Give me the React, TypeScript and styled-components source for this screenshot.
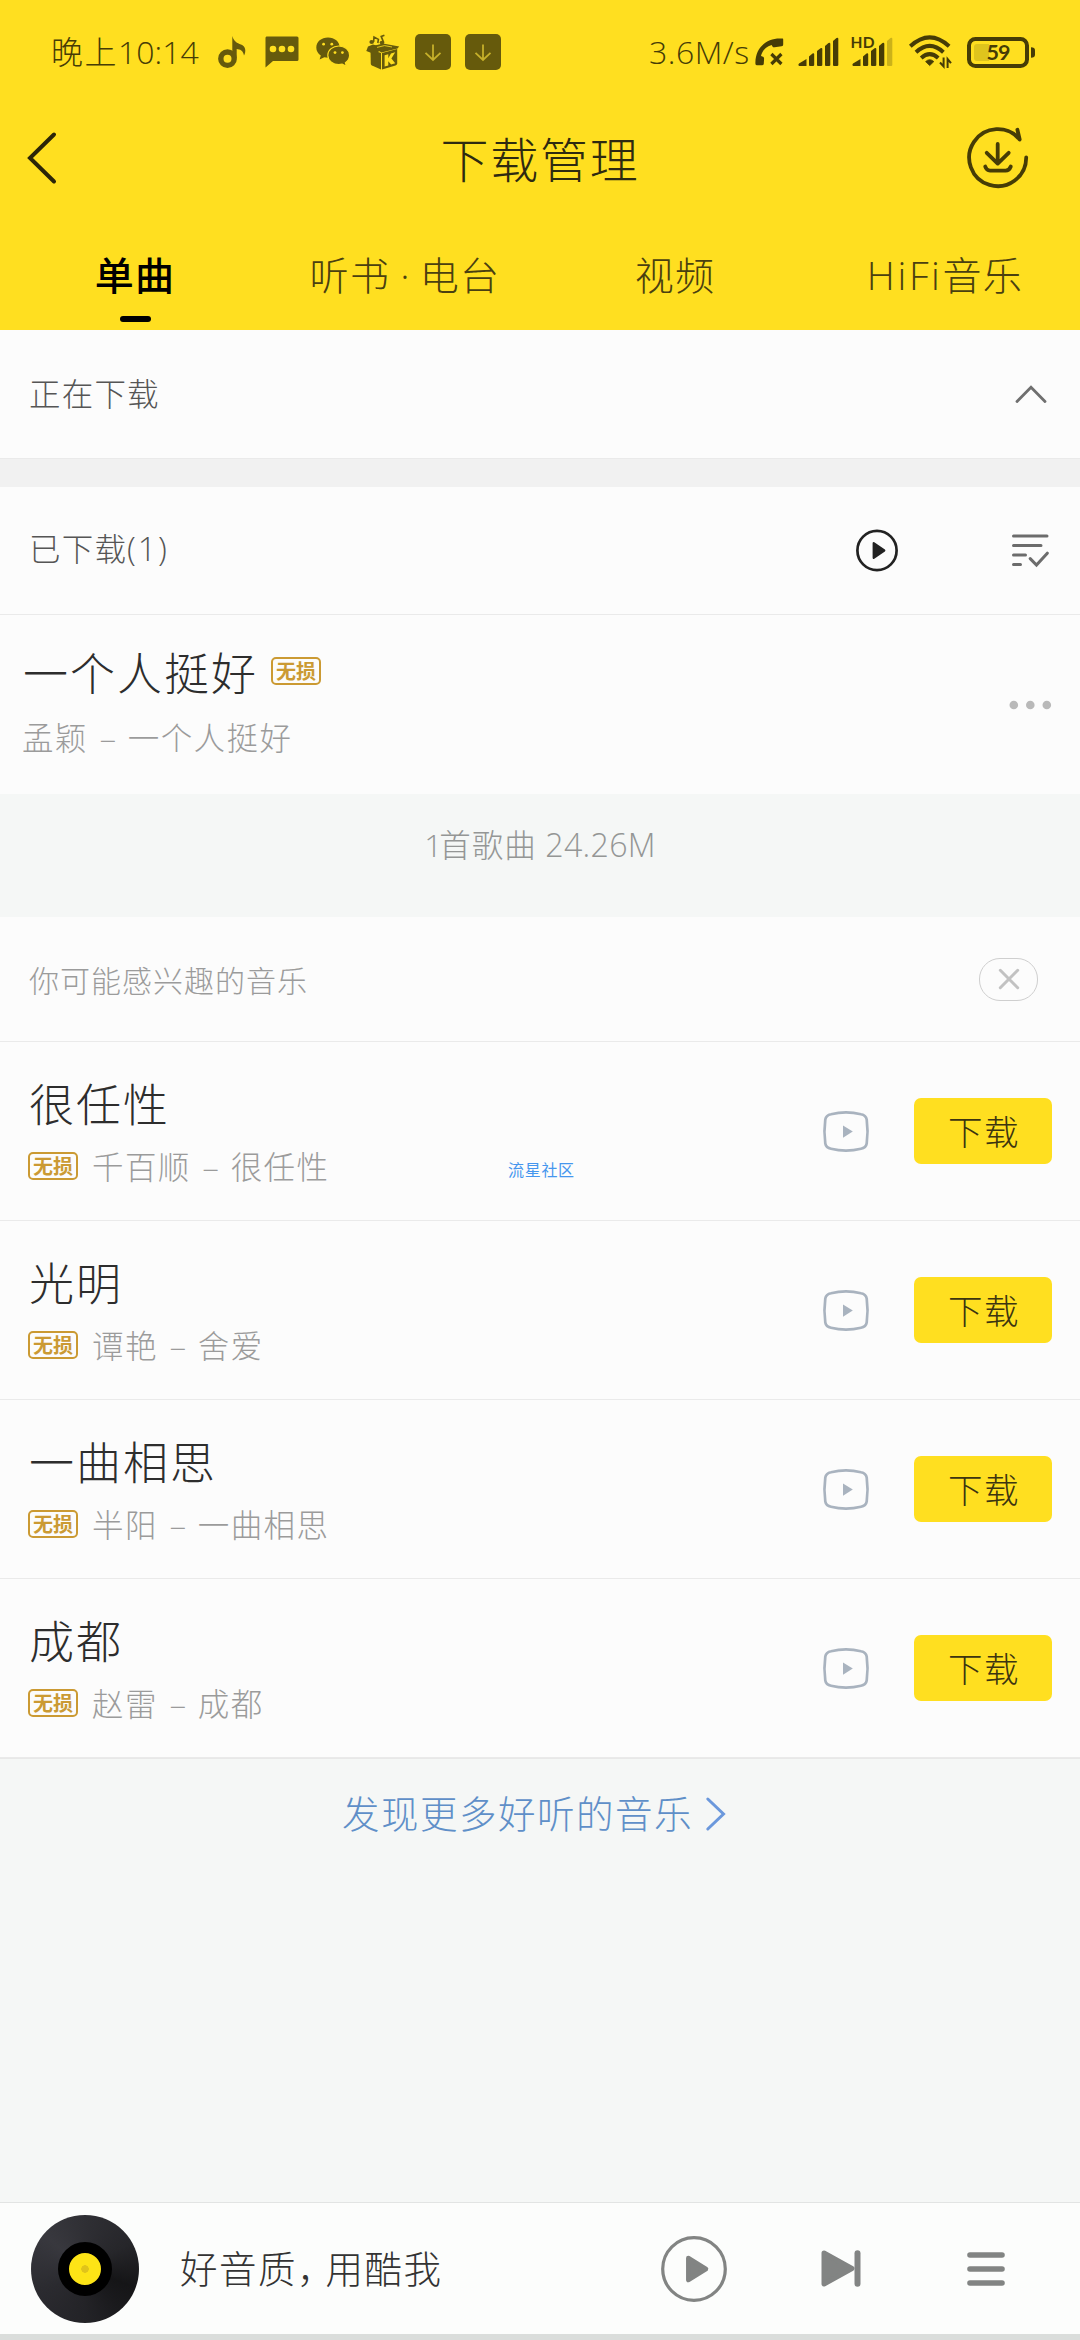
import React from "react";
import styled, { createGlobalStyle } from "styled-components";

const yellow = "#ffdf20";
const statusInk = "#463c06";
const statusMuted = "#665a0c";
const gold = "#cb9a33";

const GlobalStyle = createGlobalStyle`
  * { box-sizing: border-box; }
  body {
    margin: 0;
    background: #f5f7f6;
    font-family: "Noto Sans CJK SC", sans-serif;
    font-weight: 300;
    -webkit-font-smoothing: antialiased;
  }
`;

const Page = styled.div`
  width: 1080px;
  height: 2340px;
  display: flex;
  flex-direction: column;
  overflow: hidden;
  position: relative;
`;

const Text = styled.span<{ $size: number; $track?: number; $color?: string; $up?: number }>`
  font-size: ${(p) => p.$size}px;
  letter-spacing: ${(p) => p.$track ?? 0}px;
  color: ${(p) => p.$color ?? "#333"};
  padding-bottom: ${(p) => p.$up ?? 0}px;
  line-height: 1;
  white-space: pre;
`;

const Latin = styled.span<{ $track?: number; $size?: string }>`
  font-family: "Open Sans", sans-serif;
  font-size: ${(p) => p.$size ?? "1em"};
  letter-spacing: ${(p) => p.$track ?? 0}px;
`;

const Dash = styled.span`
  display: inline-block;
  width: 40px;
  text-align: center;
  letter-spacing: 0;
`;

const Header = styled.header`
  height: 330px;
  background: ${yellow};
  display: flex;
  flex-direction: column;
`;

const StatusBar = styled.div`
  height: 104px;
  padding: 0 45px 0 51px;
  display: flex;
  align-items: center;
`;

const StatusGroup = styled.div<{ $right?: boolean }>`
  display: flex;
  align-items: center;
  margin-left: ${(p) => (p.$right ? "auto" : "0")};
`;

const ClockBox = styled.div`
  width: 167px;
  display: flex;
  align-items: center;
`;

const SpeedBox = styled.div`
  width: 106px;
  display: flex;
  align-items: center;
`;

const Icon = styled.svg<{ $ml?: number }>`
  display: block;
  flex: none;
  overflow: visible;
  margin-left: ${(p) => p.$ml ?? 0}px;
`;

const TitleBar = styled.div`
  height: 108px;
  padding: 0 51px 0 27px;
  display: grid;
  grid-template-columns: 150px 1fr 126px;
  align-items: center;
  & > :last-child { justify-self: end; }
`;

const TitleText = styled.h1`
  margin: 0 0 2px;
  font-weight: 300;
  font-size: 48px;
  letter-spacing: 1.7px;
  line-height: 1;
  text-align: center;
  color: #2e2a10;
`;

const Tabs = styled.nav`
  display: grid;
  grid-template-columns: repeat(4, 270px);
  height: 118px;
`;

const Tab = styled.div<{ $active?: boolean }>`
  display: flex;
  flex-direction: column;
  align-items: center;
  padding-top: 40px;
  font-size: 39px;
  line-height: 42px;
  letter-spacing: 1.3px;
  white-space: pre;
  color: ${(p) => (p.$active ? "#000" : "#4a4010")};
  font-weight: ${(p) => (p.$active ? 500 : 300)};
`;

const TabMark = styled.div`
  margin-top: 22px;
  width: 31px;
  height: 6px;
  border-radius: 3px;
  background: #000;
`;

const SectionHead = styled.section<{ $h: number; $right: number }>`
  height: ${(p) => p.$h}px;
  padding: 0 ${(p) => p.$right}px 0 29px;
  background: #fcfcfc;
  border-bottom: 1px solid #eaeaea;
  display: flex;
  align-items: center;
  justify-content: space-between;
`;

const Gap = styled.div`
  height: 28px;
  background: #f1f1f1;
`;

const Actions = styled.div<{ $gap: number }>`
  display: flex;
  align-items: center;
  gap: ${(p) => p.$gap}px;
`;

const DownloadedRow = styled.div`
  height: 179px;
  background: #fcfcfc;
  padding: 0 28px 0 22px;
  display: flex;
  align-items: center;
  justify-content: space-between;
`;

const Stack = styled.div<{ $gap: number; $up?: number }>`
  display: flex;
  flex-direction: column;
  gap: ${(p) => p.$gap}px;
  padding-bottom: ${(p) => p.$up ?? 0}px;
`;

const Line = styled.div<{ $gap: number }>`
  display: flex;
  align-items: center;
  gap: ${(p) => p.$gap}px;
`;

const SongTitle = styled.span`
  padding-left: 1px;
  font-size: 45px;
  letter-spacing: 2px;
  line-height: 1;
  color: #2d2d2d;
`;

const Badge = styled.span`
  width: 50px;
  height: 28px;
  border: 2px solid ${gold};
  border-radius: 5px;
  display: flex;
  align-items: center;
  justify-content: center;
  font-size: 20px;
  font-weight: 700;
  line-height: 1;
  color: ${gold};
`;

const Summary = styled.div`
  height: 123px;
  padding-top: 34px;
  background: #f5f7f6;
  display: flex;
  justify-content: center;
  align-items: flex-start;
`;

const ClosePill = styled.button`
  width: 59px;
  height: 43px;
  padding: 0;
  border: 1.5px solid #cfcfcf;
  border-radius: 21px;
  background: transparent;
  display: flex;
  align-items: center;
  justify-content: center;
`;

const SongRow = styled.div`
  height: 179px;
  padding: 0 28px;
  background: #fcfcfc;
  border-bottom: 1px solid #eaeaea;
  display: flex;
  align-items: center;
  justify-content: space-between;
`;

const DownloadButton = styled.button`
  width: 138px;
  height: 66px;
  padding: 0 0 2px 2px;
  border: 0;
  border-radius: 7px;
  background: ${yellow};
  font: 300 34.5px/1 "Noto Sans CJK SC", sans-serif;
  letter-spacing: 1.6px;
  color: #3c3410;
`;

const More = styled.div`
  flex: 1;
  border-top: 1px solid #e8e8e8;
  background: #f5f7f6;
  padding: 34px 0 0 342px;
  display: flex;
  align-items: flex-start;
  gap: 13px;
`;

const MoreArrow = styled.div`
  padding-top: 4px;
`;

const Player = styled.footer`
  height: 138px;
  border-top: 1px solid #e2e4e3;
  border-bottom: 6px solid #dadddb;
  background: #fcfdfc;
  padding: 0 75px 0 31px;
  display: flex;
  align-items: center;
`;

const Disc = styled.div`
  width: 108px;
  height: 108px;
  border-radius: 50%;
  background: conic-gradient(from 0deg, #2f2f34, #26262a 60deg, #151517 110deg, #1a1a1d 140deg, #232327 180deg, #2a2a2f 240deg, #38383e 310deg, #2f2f34);
  display: flex;
  align-items: center;
  justify-content: center;
`;

const DiscHub = styled.div`
  width: 54px;
  height: 54px;
  border-radius: 50%;
  border: 11px solid #000;
  background: radial-gradient(circle, #e0c41a 0 3.5px, #fde416 4px);
`;

const Slogan = styled.div`
  margin-left: 41px;
  padding-bottom: 4px;
  flex: 1;
  display: flex;
`;

const Watermark = styled.span`
  position: absolute;
  left: 508px;
  top: 1160px;
  font-size: 16px;
  line-height: 18px;
  letter-spacing: 0.7px;
  font-weight: 400;
  color: #4596ee;
`;

const MusicNote = () => (
  <Icon width="28" height="33" viewBox="0 0 28 33">
    <circle cx="9.5" cy="22.7" r="6.7" fill="none" stroke={statusMuted} strokeWidth="5.4" />
    <path d="M14.3 0 C16 5.5 19 7.2 23 8.4 C27.5 10 28.5 15 26 19.5 C25.2 14.5 22 13.2 18.7 13 V22 H14.3 Z" fill={statusMuted} />
  </Icon>
);

const MessageBubble = () => (
  <Icon $ml={19} width="34" height="32" viewBox="0 0 34 32">
    <path d="M1.5 0.5 H32 Q33.5 0.5 33.5 2 V23.5 Q33.5 25 32 25 H8 L0.5 31.5 V2 Q0.5 0.5 1.5 0.5Z" fill={statusMuted} />
    <g fill={yellow}>
      <circle cx="8" cy="13" r="3.3" />
      <circle cx="17" cy="13" r="3.3" />
      <circle cx="26" cy="13" r="3.3" />
    </g>
  </Icon>
);

const ChatBubbles = () => (
  <Icon $ml={17} width="34" height="30" viewBox="0 0 34 30">
    <path d="M12 0.5 C5.4 0.5 0.3 4.8 0.3 10.5 C0.3 13.8 2 16.7 4.8 18.6 L3.6 22.5 L8.3 20.2 C9.5 20.5 10.8 20.7 12 20.7 C18.6 20.7 23.7 16.2 23.7 10.5 C23.7 4.8 18.6 0.5 12 0.5Z" fill={statusMuted} />
    <path d="M22.8 9 C16.8 9 11.8 13 11.8 18.3 C11.8 23.6 16.8 27.6 22.8 27.6 C24 27.6 25.1 27.4 26.2 27.1 L30.4 29.4 L29.4 25.7 C32 24 33.6 21.3 33.6 18.3 C33.6 13 28.8 9 22.8 9Z" fill={statusMuted} stroke={yellow} strokeWidth="1.2" />
    <g fill={yellow}>
      <circle cx="7.6" cy="7.2" r="1.4" />
      <circle cx="15.8" cy="7.2" r="1.4" />
      <circle cx="19" cy="15.6" r="1.4" />
      <circle cx="26.4" cy="15.6" r="1.4" />
    </g>
  </Icon>
);

const MusicBox = () => (
  <Icon $ml={16} width="34" height="36" viewBox="0 0 34 36">
    <g fill={statusMuted}>
      <path d="M4.5 15.5 L15 19 V35.5 L6 31.5 Q5 31 4.8 30Z" />
      <path d="M16 19 L31.2 15 V29.5 Q31 31 29.5 31.5 L16 35.5Z" />
      <path d="M5 12.5 L17 9.6 L33.2 12.6 L31.5 14.6 L15.6 18.4Z" />
      <path d="M0.3 17 L5 12.4 L14.5 15.2 L10 20.8Z" />
      <path d="M0.3 17 L2 12.6 L7 10.5 L12 12Z" />
      <ellipse cx="5.7" cy="8" rx="2.3" ry="1.9" />
      <ellipse cx="16" cy="8.6" rx="2.3" ry="1.9" />
    </g>
    <path d="M7.6 8 L8 3 L12.4 5.4 L11.8 9 M17.6 8.4 L15.2 2.4 L18.4 1.2" fill="none" stroke={statusMuted} strokeWidth="1.6" />
    <path d="M11 13.4 L18.5 11.6 L26 13" fill="none" stroke={yellow} strokeWidth="0.8" />
    <path d="M18.6 21.2 L22.3 20.2 V24.2 L25 19.4 L29.2 18.2 L25.4 24.4 L29.2 29.2 L25.1 30.5 L22.3 27.2 V31.4 L18.6 32.4Z" fill={yellow} />
  </Icon>
);

const DownloadBadge = ({ ml }: { ml: number }) => (
  <Icon $ml={ml} width="36" height="36" viewBox="0 0 36 36">
    <rect width="36" height="36" rx="5" fill={statusMuted} />
    <path d="M18 10.5 V25 M10.5 18.8 L18 26 L25.5 18.8" fill="none" stroke="#c6b02a" strokeWidth="1.8" />
  </Icon>
);

const CallBlocked = () => (
  <Icon width="29" height="28" viewBox="0 0 29 28">
    <path d="M27.6 0.6 C13 -0.8 0.6 8.5 0.4 24.5 C0.3 26.6 0.8 27.2 1.8 27.2 H7.2 C8.3 27.2 8.7 26.7 8.8 25.6 L9.1 20.6 C9.1 19.4 8.6 18.7 7.4 18.4 L6 18 C7.2 12.6 11 8.4 16.6 7 L17.5 8.5 C18 9.3 18.6 9.5 19.6 9.3 L26.6 8.2 C27.8 8 28.2 7.4 28.2 6.2 V1.6 C28.2 1 28 0.7 27.6 0.6Z" fill={statusInk} />
    <path d="M16.4 16 L26.4 26 M26.4 16 L16.4 26" stroke={statusInk} strokeWidth="3.2" />
  </Icon>
);

const SignalBars = ({ ml, faded, hd }: { ml: number; faded?: boolean; hd?: boolean }) => (
  <Icon $ml={ml} width="41" height="30" viewBox="0 0 41 30">
    <g fill={statusInk}>
      <path d="M1 26.5 L8.5 22 V29 H1.2 Q-0.6 28 1 26.5Z" />
      <path d="M11 19.5 L14.5 16.5 Q16.2 15.8 16.2 17.5 V28 Q16.2 29 15 29 H12 Q11 29 11 28Z" />
      <path d="M19 14 L22.5 11.3 Q24.3 10.5 24.3 12 V28 Q24.3 29 23 29 H20 Q19 29 19 28Z" />
      <path d="M27 9 L30.5 6 Q32.3 5.3 32.3 7 V28 Q32.3 29 31 29 H28 Q27 29 27 28Z" />
      <path opacity={faded ? 0.28 : 1} d="M35 4 L38.5 1 Q40.3 0 40.3 2 V28 Q40.3 29 39 29 H36 Q35 29 35 28Z" />
    </g>
    {hd && (
      <text x="-1.5" y="10.5" fontFamily="Lato, sans-serif" fontWeight="700" fontSize="15.5" letterSpacing="0.4" fill={statusInk} stroke={yellow} strokeWidth="1.5" paintOrder="stroke">HD</text>
    )}
  </Icon>
);

const Wifi = () => (
  <Icon $ml={16} width="42" height="34" viewBox="0 0 42 34">
    <g fill="none" stroke={statusInk} strokeWidth="4">
      <path d="M1.3 11.2 Q20.7 -6.6 40.1 11.2" />
      <path d="M7 17.2 Q20.7 4.6 34.4 17.2" />
      <path d="M12.2 23 Q20.7 15.4 29.2 23" />
    </g>
    <path d="M16.6 26.6 Q20.7 22.8 24.8 26.6 L20.7 30.6Z" fill={statusInk} stroke={statusInk} strokeWidth="0.8" />
    <path d="M34.6 22.5 V31.5 L31 27.5 M38.6 33 V24 L42 28.2" fill="none" stroke={statusInk} strokeWidth="2" />
  </Icon>
);

const Battery = () => (
  <Icon $ml={16} width="68" height="31" viewBox="0 0 68 31">
    <rect x="2" y="2" width="58" height="27" rx="6.5" fill="none" stroke={statusInk} strokeWidth="4" />
    <path d="M10 7 H22 V24 H10 Q7 24 7 21 V10 Q7 7 10 7Z" fill="#dfc41d" />
    <path d="M64 10.3 Q68 10.3 68 13.5 V17.5 Q68 20.7 64 20.7Z" fill={statusInk} />
    <text x="19.6" y="23" fontFamily="Lato, sans-serif" fontWeight="700" fontSize="21.5" letterSpacing="-1" fill={statusInk}>59</text>
  </Icon>
);

const BackArrow = () => (
  <Icon width="30" height="52" viewBox="0 0 30 52">
    <path d="M27 2.5 L3 26 L27 49.5" fill="none" stroke="#2b2508" strokeWidth="4" strokeLinecap="round" />
  </Icon>
);

const SyncDownload = () => (
  <Icon width="62" height="62" viewBox="0 0 62 62">
    <g fill="none" stroke={statusInk} strokeWidth="3.8" strokeLinecap="round" strokeLinejoin="round">
      <path d="M59.2 30.5 A28.5 28.5 0 1 1 52.7 12.5 L50.4 2.8" />
      <path d="M30.7 17 V36 M19.7 25.8 L30.7 36.6 L41.7 25.8 M18.2 39.5 Q19.5 43.6 23 43.6 H38.6 Q42.2 43.6 43.8 39.5" />
    </g>
  </Icon>
);

const ChevronUp = () => (
  <Icon width="30" height="18" viewBox="0 0 30 18">
    <path d="M1 16.5 L15 2.2 L29 16.5" fill="none" stroke="#6f6f6f" strokeWidth="2.8" strokeLinecap="round" />
  </Icon>
);

const PlayAll = () => (
  <Icon width="42" height="42" viewBox="0 0 42 42">
    <circle cx="21" cy="20.5" r="19.6" fill="none" stroke="#222" strokeWidth="2.7" />
    <path d="M17.7 13.2 L28.3 20.5 L17.7 27.8Z" fill="#222" stroke="#222" strokeWidth="2.2" strokeLinejoin="round" />
  </Icon>
);

const ListCheck = () => (
  <Icon width="37" height="33" viewBox="0 0 37 33">
    <path d="M1.5 2 H35 M1.5 11.5 H29 M1.5 21 H13.5 M1.5 30.5 H8.5 M18.2 24.6 L24.5 31 L35.3 19.2" fill="none" stroke="#6c6c6c" strokeWidth="3" strokeLinecap="round" />
  </Icon>
);

const Dots = () => (
  <Icon width="43" height="10" viewBox="0 0 43 10">
    <g fill="#b9b9b9">
      <circle cx="4.8" cy="5" r="4.3" />
      <circle cx="21.3" cy="5" r="4.3" />
      <circle cx="37.8" cy="5" r="4.3" />
    </g>
  </Icon>
);

const Cross = () => (
  <Icon width="20" height="20" viewBox="0 0 20 20">
    <path d="M1.3 1.3 L18.7 18.7 M18.7 1.3 L1.3 18.7" stroke="#c2c2c2" strokeWidth="3" strokeLinecap="round" />
  </Icon>
);

const VideoIcon = () => (
  <Icon width="46" height="41" viewBox="0 0 46 41">
    <path d="M8 3.2 Q23 -0.5 38 3.2 Q43 4.2 43.7 8.5 Q45.4 20.5 43.7 32.5 Q43 36.8 38 37.8 Q23 41.5 8 37.8 Q3 36.8 2.3 32.5 Q0.6 20.5 2.3 8.5 Q3 4.2 8 3.2Z" fill="none" stroke="#a9b3bf" strokeWidth="2.7" />
    <path d="M20 14.5 L29.8 20.5 L20 26.7Z" fill="#a9b3bf" />
  </Icon>
);

const ChevronRight = () => (
  <Icon width="20" height="34" viewBox="0 0 20 34">
    <path d="M1.8 2 L17.5 17 L1.8 32" fill="none" stroke="#6b98dc" strokeWidth="3" strokeLinecap="round" />
  </Icon>
);

const PlayCircle = () => (
  <Icon width="66" height="66" viewBox="0 0 66 66">
    <circle cx="33" cy="33" r="31.3" fill="none" stroke="#828483" strokeWidth="3.2" />
    <path d="M27.3 22 L45 33 L27.3 44Z" fill="#828483" stroke="#828483" strokeWidth="4.5" strokeLinejoin="round" />
  </Icon>
);

const NextTrack = () => (
  <Icon $ml={94} width="40" height="37" viewBox="0 0 40 37">
    <path d="M3 3 L31 18.5 L3 34Z" fill="#828483" stroke="#828483" strokeWidth="5" strokeLinejoin="round" />
    <path d="M36.5 3.2 V33.8" stroke="#828483" strokeWidth="6" strokeLinecap="round" />
  </Icon>
);

const Queue = () => (
  <Icon $ml={106} width="38" height="36" viewBox="0 0 38 36">
    <path d="M3 4 H35 M3 18 H35 M3 32 H35" stroke="#828483" strokeWidth="5.6" strokeLinecap="round" />
  </Icon>
);

const Credit = ({ artist, album }: { artist: string; album: string }) => (
  <Text $size={31.5} $track={1.4} $color="#9b9b9b">{artist}<Dash>–</Dash>{album}</Text>
);

const songs = [
  { title: "很任性", artist: "千百顺", album: "很任性" },
  { title: "光明", artist: "谭艳", album: "舍爱" },
  { title: "一曲相思", artist: "半阳", album: "一曲相思" },
  { title: "成都", artist: "赵雷", album: "成都" },
];

export default function App() {
  return (
    <Page>
      <GlobalStyle />
      <Header>
        <StatusBar>
          <StatusGroup>
            <ClockBox>
              <Text $size={32} $track={1.5} $up={2} $color={statusInk}>晚上<Latin $track={0}>10:14</Latin></Text>
            </ClockBox>
            <MusicNote />
            <MessageBubble />
            <ChatBubbles />
            <MusicBox />
            <DownloadBadge ml={15} />
            <DownloadBadge ml={14} />
          </StatusGroup>
          <StatusGroup $right>
            <SpeedBox>
              <Text $size={32} $up={2} $color={statusInk}><Latin $track={0.5}>3.6M/s</Latin></Text>
            </SpeedBox>
            <CallBlocked />
            <SignalBars ml={14} />
            <SignalBars ml={13} faded hd />
            <Wifi />
            <Battery />
          </StatusGroup>
        </StatusBar>
        <TitleBar>
          <BackArrow />
          <TitleText>下载管理</TitleText>
          <SyncDownload />
        </TitleBar>
        <Tabs>
          <Tab $active>单曲<TabMark /></Tab>
          <Tab><span>听书<Latin> · </Latin>电台</span></Tab>
          <Tab>视频</Tab>
          <Tab><span><Latin $track={2.6}>HiFi</Latin>音乐</span></Tab>
        </Tabs>
      </Header>

      <SectionHead $h={129} $right={34}>
        <Text $size={31.5} $track={1.2} $up={2} $color="#555">正在下载</Text>
        <ChevronUp />
      </SectionHead>
      <Gap />
      <SectionHead $h={128} $right={31}>
        <Text $size={31.5} $track={1.2} $up={4} $color="#555">已下载<Latin $size="1.03em" $track={1.8}>(1)</Latin></Text>
        <Actions $gap={114}>
          <PlayAll />
          <ListCheck />
        </Actions>
      </SectionHead>
      <DownloadedRow>
        <Stack $gap={27} $up={8}>
          <Line $gap={13}>
            <SongTitle>一个人挺好</SongTitle>
            <Badge>无损</Badge>
          </Line>
          <Credit artist="孟颖" album="一个人挺好" />
        </Stack>
        <Dots />
      </DownloadedRow>
      <Summary>
        <Text $size={31.5} $track={1} $color="#949695"><Latin $track={-3}>1</Latin>首歌曲<Latin $size="1.02em" $track={0.3}> 24.26M</Latin></Text>
      </Summary>

      <SectionHead $h={125} $right={42}>
        <Text $size={30} $track={1} $color="#9b9b9b">你可能感兴趣的音乐</Text>
        <ClosePill><Cross /></ClosePill>
      </SectionHead>
      {songs.map((s) => (
        <SongRow key={s.title}>
          <Stack $gap={25}>
            <SongTitle>{s.title}</SongTitle>
            <Line $gap={14}>
              <Badge>无损</Badge>
              <Credit artist={s.artist} album={s.album} />
            </Line>
          </Stack>
          <Actions $gap={45}>
            <VideoIcon />
            <DownloadButton>下载</DownloadButton>
          </Actions>
        </SongRow>
      ))}
      <More>
        <Text $size={37.5} $track={1.5} $color="#5f8fc8">发现更多好听的音乐</Text>
        <MoreArrow><ChevronRight /></MoreArrow>
      </More>

      <Player>
        <Disc><DiscHub /></Disc>
        <Slogan>
          <Text $size={37.5} $track={1.5}>好音质</Text>
          <Text $size={37.5} $track={-9}>，</Text>
          <Text $size={37.5} $track={1.5}>用酷我</Text>
        </Slogan>
        <PlayCircle />
        <NextTrack />
        <Queue />
      </Player>
      <Watermark>流星社区</Watermark>
    </Page>
  );
}
